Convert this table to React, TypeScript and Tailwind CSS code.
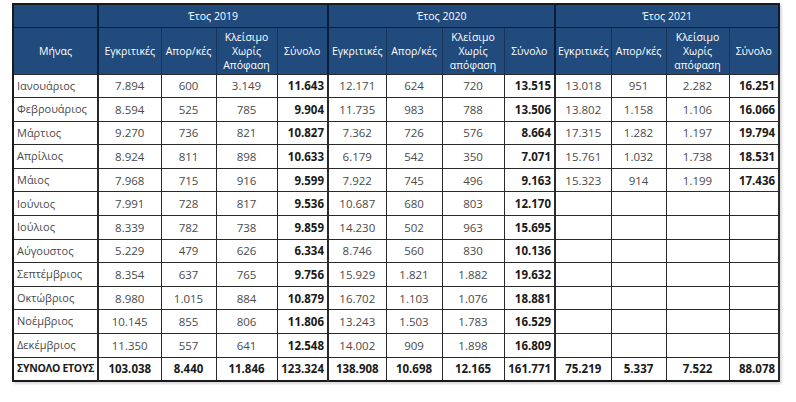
const years = ['2019', '2020', '2021']

type Row = { month: string; values: (string | null)[] }

const rows: Row[] = [
  { month: 'Ιανουάριος', values: ['7.894', '600', '3.149', '11.643', '12.171', '624', '720', '13.515', '13.018', '951', '2.282', '16.251'] },
  { month: 'Φεβρουάριος', values: ['8.594', '525', '785', '9.904', '11.735', '983', '788', '13.506', '13.802', '1.158', '1.106', '16.066'] },
  { month: 'Μάρτιος', values: ['9.270', '736', '821', '10.827', '7.362', '726', '576', '8.664', '17.315', '1.282', '1.197', '19.794'] },
  { month: 'Απρίλιος', values: ['8.924', '811', '898', '10.633', '6.179', '542', '350', '7.071', '15.761', '1.032', '1.738', '18.531'] },
  { month: 'Μάιος', values: ['7.968', '715', '916', '9.599', '7.922', '745', '496', '9.163', '15.323', '914', '1.199', '17.436'] },
  { month: 'Ιούνιος', values: ['7.991', '728', '817', '9.536', '10.687', '680', '803', '12.170', null, null, null, null] },
  { month: 'Ιούλιος', values: ['8.339', '782', '738', '9.859', '14.230', '502', '963', '15.695', null, null, null, null] },
  { month: 'Αύγουστος', values: ['5.229', '479', '626', '6.334', '8.746', '560', '830', '10.136', null, null, null, null] },
  { month: 'Σεπτέμβριος', values: ['8.354', '637', '765', '9.756', '15.929', '1.821', '1.882', '19.632', null, null, null, null] },
  { month: 'Οκτώβριος', values: ['8.980', '1.015', '884', '10.879', '16.702', '1.103', '1.076', '18.881', null, null, null, null] },
  { month: 'Νοέμβριος', values: ['10.145', '855', '806', '11.806', '13.243', '1.503', '1.783', '16.529', null, null, null, null] },
  { month: 'Δεκέμβριος', values: ['11.350', '557', '641', '12.548', '14.002', '909', '1.898', '16.809', null, null, null, null] },
]

const totals = ['103.038', '8.440', '11.846', '123.324', '138.908', '10.698', '12.165', '161.771', '75.219', '5.337', '7.522', '88.078']

const widths = [63, 55, 61, 51, 58, 56, 62, 51, 56, 55, 63, 50]

export default function App() {
  return (
    <div className="w-[796px] h-[402px] bg-white pt-[3px] pl-[12px]" style={{ fontFamily: '"Open Sans", "Noto Sans", sans-serif' }}>
      <table className="w-[766px] table-fixed border-collapse border-2 border-[#1a1a1a] shadow-[2px_2px_2px_rgba(0,0,0,0.15)]">
        <colgroup>
          <col className="w-[85px]" />
          {widths.map((w, i) => (
            <col key={i} style={{ width: w }} />
          ))}
        </colgroup>
        <thead className="bg-[#214a7d] text-white text-[10.5px] leading-[14px]">
          <tr className="h-[23px]">
            <th className="border-r-2 border-b border-[#0c1d36]" />
            {years.map((y) => (
              <th key={y} colSpan={4} className="border-r-2 border-b border-[#0c1d36] font-normal">
                Έτος {y}
              </th>
            ))}
          </tr>
          <tr className="h-[47px]">
            <th className="border-r-2 border-[#0c1d36] font-normal">Μήνας</th>
            {years.map((y) => (
              <HeaderGroup key={y} year={y} />
            ))}
          </tr>
        </thead>
        <tbody className="text-[11.5px] text-[#4a4a4a]">
          {rows.map((r) => (
            <tr key={r.month} className="h-[23.6px]">
              <td className="border-r-2 border-t border-[#2a2a2a] pl-[3px] text-[11px]">{r.month}</td>
              {r.values.map((v, i) => (
                <td
                  key={i}
                  className={
                    i % 4 === 3
                      ? 'border-r-2 border-t border-[#2a2a2a] text-right pr-[3px] font-bold text-[#1a1a1a]'
                      : 'border-r border-t border-[#2a2a2a] text-center'
                  }
                >
                  {v}
                </td>
              ))}
            </tr>
          ))}
          <tr className="h-[23.6px] font-bold text-[#1a1a1a]">
            <td className="border-r-2 border-t border-[#2a2a2a] pl-[3px] text-[10.5px] tracking-[-0.3px]">ΣΥΝΟΛΟ ΕΤΟΥΣ</td>
            {totals.map((v, i) => (
              <td
                key={i}
                className={
                  i % 4 === 3
                    ? 'border-r-2 border-t border-[#2a2a2a] text-right pr-[3px]'
                    : 'border-r border-t border-[#2a2a2a] text-center'
                }
              >
                {v}
              </td>
            ))}
          </tr>
        </tbody>
      </table>
    </div>
  )
}

function HeaderGroup({ year }: { year: string }) {
  const last = year === '2019' ? 'Απόφαση' : 'απόφαση'
  return (
    <>
      <th className="border-r border-[#17335a] font-normal">Εγκριτικές</th>
      <th className="border-r border-[#17335a] font-normal">Απορ/κές</th>
      <th className="border-r border-[#17335a] font-normal">
        Κλείσιμο
        <br />
        Χωρίς
        <br />
        {last}
      </th>
      <th className="border-r-2 border-[#0c1d36] font-normal">Σύνολο</th>
    </>
  )
}
